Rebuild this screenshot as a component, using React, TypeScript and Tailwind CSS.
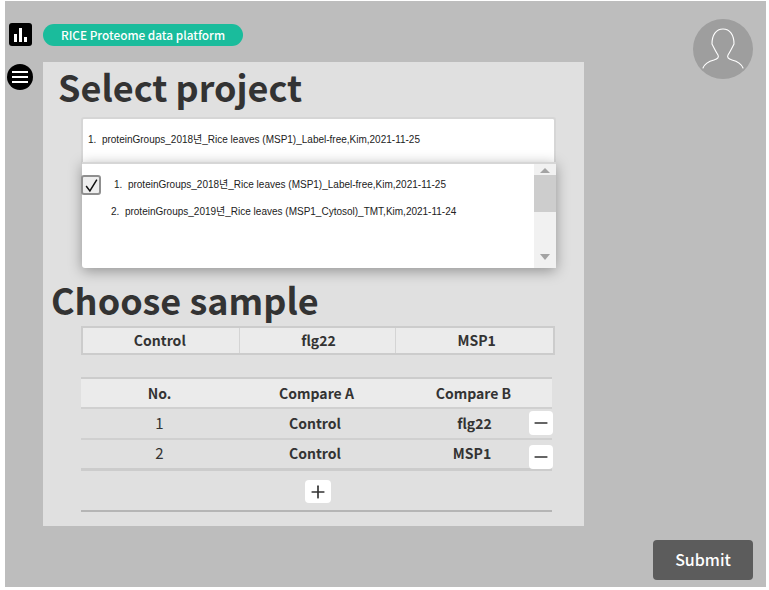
import { Minus, Plus } from 'lucide-react'

const kr = "font-['Noto_Sans_CJK_KR','Noto_Sans',sans-serif]"
const listFont = "font-['Liberation_Sans','Noto_Sans_CJK_KR',sans-serif]"

const rows = [
  { no: 1, a: 'Control', b: 'flg22', bClass: 'pl-[2px]' },
  { no: 2, a: 'Control', b: 'MSP1', bClass: 'pr-[3px]' },
]

function ChartIcon() {
  return (
    <div className="flex h-[23px] w-[23px] items-center justify-center rounded-[3px] bg-black">
      <svg width="17" height="17" viewBox="0 0 17 17" fill="white">
        <rect x="2" y="8" width="3" height="8" />
        <rect x="7" y="2" width="3" height="14" />
        <rect x="12" y="11" width="3" height="5" />
      </svg>
    </div>
  )
}

function MenuIcon() {
  return (
    <div className="flex h-[26px] w-[26px] flex-col items-center justify-center gap-[3px] rounded-full bg-black">
      <span className="h-[2px] w-[16px] bg-white" />
      <span className="h-[2px] w-[16px] bg-white" />
      <span className="h-[2px] w-[16px] bg-white" />
    </div>
  )
}

function Avatar() {
  return (
    <div className="flex h-[60px] w-[60px] items-center justify-center rounded-full bg-[#9e9e9e]">
      <svg width="60" height="60" viewBox="0 0 60 60" fill="none" stroke="white" strokeWidth="1.1" strokeLinecap="round">
        <path d="M10 49C12 44 17 42 21 41C25 40 26 38 25 36C23 33 21 29 19 25C19 16 23 10 30 10C37 10 41 16 41 25C39 29 37 33 35 36C34 38 35 40 39 41C43 42 48 44 50 49" />
      </svg>
    </div>
  )
}

function Dropdown() {
  return (
    <div className={`absolute left-[39px] top-[100px] flex h-[106px] w-[474px] rounded-b-[3px] border-t-2 border-[#d6d6d6] bg-white shadow-[0_3px_14px_rgba(0,0,0,0.35)] ${listFont}`}>
      <div className="relative flex-1 pt-[14px] text-[10px] text-[#222]">
        <div className="pl-[32px] leading-[14px] whitespace-pre">1.  proteinGroups_2018년_Rice leaves (MSP1)_Label-free,Kim,2021-11-25</div>
        <div className="mt-[13px] pl-[29px] leading-[14px] whitespace-pre">2.  proteinGroups_2019년_Rice leaves (MSP1_Cytosol)_TMT,Kim,2021-11-24</div>
        <div className="absolute left-[-1px] top-[11px] flex h-[20px] w-[20px] items-center justify-center rounded-[3px] border-2 border-[#8f8f8f] bg-[#eeeeee]">
          <svg width="15" height="15" viewBox="0 0 14 14" fill="none" stroke="#111" strokeWidth="1.400">
            <path d="M2 7.500 5.500 12 12 1.500" />
          </svg>
        </div>
      </div>
      <div className="flex w-[22px] flex-col items-center bg-[#f1f1f1]">
        <div className="flex h-[9px] items-end">
          <div className="h-0 w-0 border-x-[5px] border-b-[5px] border-x-transparent border-b-[#a3a3a3]" />
        </div>
        <div className="mt-[2px] h-[37px] w-full bg-[#cdcdcd]" />
        <div className="flex-1" />
        <div className="mb-[8px] h-0 w-0 border-x-[5px] border-t-[6px] border-x-transparent border-t-[#a3a3a3]" />
      </div>
    </div>
  )
}

export default function App() {
  return (
    <div className={`h-[590px] w-[769px] bg-white pb-[3px] pl-[5px] pr-[3px] pt-px ${kr}`}>
      <div className="flex h-[586px] bg-[#bdbdbd]">
        <div className="flex w-[38px] flex-col items-center">
          <div className="ml-[-7px] mt-[22px]">
            <ChartIcon />
          </div>
          <div className="ml-[-9px] mt-[18px]">
            <MenuIcon />
          </div>
        </div>

        <div className="w-[541px]">
          <div className="mt-[23px] flex h-[22px] w-[200px] items-center justify-center rounded-full bg-[#1abc9c] text-[11.800px] font-medium text-white">
            RICE Proteome data platform
          </div>

          <div className="relative mt-[16px] h-[464px] bg-[#e0e0e0] text-[#333]">
            <h1 className="ml-[15px] h-[55px] text-[36px] leading-[48px] font-bold">Select project</h1>

            <div className={`ml-[38px] h-[48px] w-[475px] rounded-[3px] border-2 border-[#d6d6d6] border-b-0 bg-white pl-[5px] pt-[14px] text-[10px] leading-[14px] whitespace-pre text-[#222] ${listFont}`}>
              1.  proteinGroups_2018년_Rice leaves (MSP1)_Label-free,Kim,2021-11-25
            </div>
            <Dropdown />

            <h2 className="ml-[8px] mt-[109px] h-[50px] text-[36px] leading-[50px] font-bold">Choose sample</h2>

            <div className="ml-[38px] mt-[2px] grid h-[29px] w-[474px] grid-cols-3 border-2 border-[#cccccc] bg-[#ebebeb] text-[14px] font-bold">
              <div className="flex items-center justify-center border-r border-[#d4d4d4] pr-[2px]">Control</div>
              <div className="flex items-center justify-center border-r border-[#d4d4d4] pl-[2px]">flg22</div>
              <div className="flex items-center justify-center pl-[4px]">MSP1</div>
            </div>

            <div className="ml-[38px] mt-[22px] w-[471px] text-[14px]">
              <div className="grid h-[32px] grid-cols-3 border-y-2 border-t-[#cccccc] border-b-[#d0d0d0] bg-[#ebebeb] font-bold">
                <div className="flex items-center justify-center">No.</div>
                <div className="flex items-center justify-center">Compare A</div>
                <div className="flex items-center justify-center">Compare B</div>
              </div>
              {rows.map((r, i) => (
                <div key={r.no} className={`relative grid grid-cols-3 ${i === 0 ? 'h-[31px] border-b-2 border-[#d0d0d0]' : 'h-[31px] border-b-[3px] border-[#cccccc] pb-[1px]'}`}>
                  <div className="flex items-center justify-center text-[15px]">{r.no}</div>
                  <div className="flex items-center justify-center pr-[3px] font-bold">{r.a}</div>
                  <div className={`flex items-center justify-center font-bold ${r.bClass}`}>{r.b}</div>
                  <button className={`absolute right-[-1px] flex h-[24px] w-[24px] items-center justify-center rounded-[4px] bg-white ${i === 0 ? 'top-[2px]' : 'top-[5px]'}`}>
                    <Minus size={20} strokeWidth={2} color="#333" />
                  </button>
                </div>
              ))}
              <div className="flex h-[41px] items-start justify-center border-b-2 border-[#b5b5b5] pl-[3px] pt-[9px]">
                <button className="flex h-[23px] w-[26px] items-center justify-center rounded-[4px] bg-white">
                  <Plus size={20} strokeWidth={2} color="#333" />
                </button>
              </div>
            </div>
          </div>
        </div>

        <div className="flex flex-1 flex-col items-end justify-between pb-[7px] pr-[13px] pt-[18px]">
          <Avatar />
          <button className="h-[40px] w-[100px] rounded-[4px] bg-[#5c5c5c] pb-[2px] text-[16px] font-medium text-white">Submit</button>
        </div>
      </div>
    </div>
  )
}
